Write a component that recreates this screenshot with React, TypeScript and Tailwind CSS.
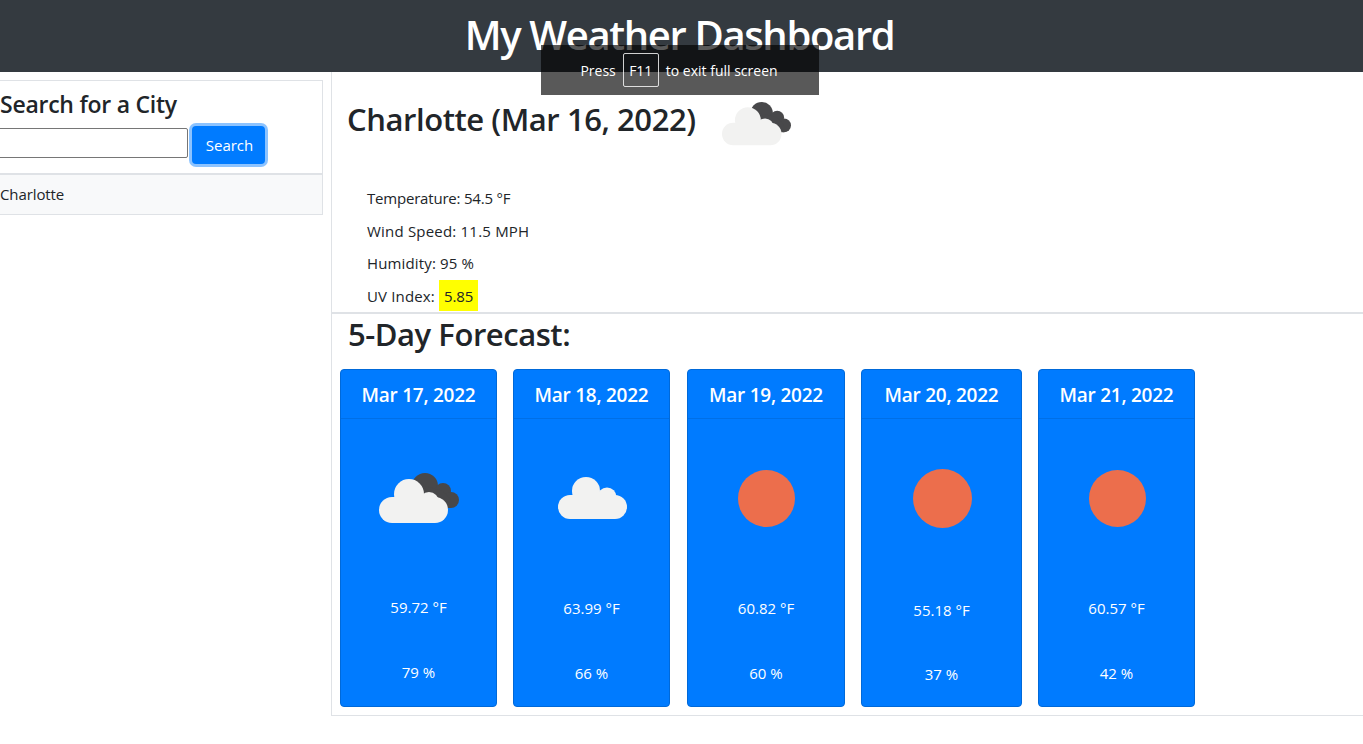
const font = "font-['Open_Sans',sans-serif]";

const BrokenClouds = ({ width, height }: { width: number; height: number }) => (
  <svg width={width} height={height} viewBox="0 0 80 52" className="block">
    <g fill="#48484a">
      <circle cx="46" cy="13" r="13" />
      <circle cx="64" cy="18" r="8" />
      <circle cx="72" cy="27" r="8" />
      <path d="M46 13 L64 18 L72 27 L72 35 L50 35 Z" />
    </g>
    <g fill="#f2f2f1">
      <circle cx="30" cy="21" r="15" />
      <circle cx="50" cy="29" r="10" />
      <rect x="0" y="24" width="69" height="26" rx="13" />
    </g>
  </svg>
);

const ScatteredClouds = () => (
  <svg width="69" height="42" viewBox="0 0 69 42" className="block">
    <g fill="#f2f2f1">
      <circle cx="28" cy="14" r="14" />
      <circle cx="49" cy="20" r="9.5" />
      <rect x="0" y="18" width="69" height="24" rx="12" />
    </g>
  </svg>
);

const Sun = ({ size }: { size: number }) => (
  <svg width={size} height={size} viewBox="0 0 60 60" className="block">
    <circle cx="30" cy="30" r="30" fill="#ec6e4c" />
  </svg>
);

const forecast = [
  { date: "Mar 17, 2022", temp: "59.72 °F", hum: "79 %", width: "w-[157px]", gap: "mt-[18px]", humGap: "mt-[41px]", iconBox: "pt-[2px]", icon: <BrokenClouds width={80} height={52} /> },
  { date: "Mar 18, 2022", temp: "63.99 °F", hum: "66 %", width: "w-[157px]", gap: "mt-[19px]", humGap: "mt-[41px]", iconBox: "pl-[2px]", icon: <ScatteredClouds /> },
  { date: "Mar 19, 2022", temp: "60.82 °F", hum: "60 %", width: "w-[158px] ml-[1px]", gap: "mt-[19px]", humGap: "mt-[41px]", iconBox: "", icon: <Sun size={57} /> },
  { date: "Mar 20, 2022", temp: "55.18 °F", hum: "37 %", width: "w-[161px]", gap: "mt-[21px]", humGap: "mt-[40px]", iconBox: "pl-[2px]", icon: <Sun size={59} /> },
  { date: "Mar 21, 2022", temp: "60.57 °F", hum: "42 %", width: "w-[157px]", gap: "mt-[19px]", humGap: "mt-[41px]", iconBox: "pl-[2px]", icon: <Sun size={57} /> },
];

export default function App() {
  return (
    <div className={`${font} relative h-[744px] w-[1363px] overflow-hidden bg-white text-[#212529]`}>
      <header className="flex h-[72px] items-center justify-center bg-[#343a40] pr-[4px]">
        <h1 className="-mt-[3px] text-[40px] leading-[48px] font-semibold tracking-[-1.35px] text-white">My Weather Dashboard</h1>
      </header>

      {/* full screen hint */}
      <div className="absolute top-[45px] left-[541px] flex h-[50px] w-[278px] items-center justify-center gap-[7px] bg-black/65 pr-[2px] text-[14px] text-white">
        <span>Press</span>
        <span className="flex h-[34px] w-[36px] items-center justify-center rounded-[2px] border border-white/80">F11</span>
        <span>to exit full screen</span>
      </div>

      <div className="flex">
        <aside className="w-[331px] shrink-0 pt-2 pr-2">
          <div className="border-y border-r border-[#dfe2e6]">
            <div className="h-[92px] pt-[6px]">
              <h3 className="text-[23px] leading-[34px] font-semibold tracking-[-0.25px] whitespace-nowrap">Search for a City</h3>
              <div className="mt-[5px] flex items-start">
                <input className="-ml-[2px] mt-[2px] h-[30px] w-[190px] rounded-[2px] border border-[#767676] bg-white" />
                <button className="ml-1 h-[38px] w-[73px] rounded-[4px] bg-[#007bff] pl-[2px] text-[15px] text-white ring-[3px] ring-[#007bff]/45">Search</button>
              </div>
            </div>
            <div className="flex h-[41px] items-center border-t-2 border-[#dfe2e6] bg-[#f8f9fa] text-[15px] tracking-[-0.1px]">Charlotte</div>
          </div>
        </aside>

        <main className="h-[644px] flex-1 border-b border-l border-[#dfe2e6]">
          <section className="h-[240px] pt-[24px]">
            <div className="relative pl-[15px]">
              <h2 className="text-[31px] leading-[46px] font-semibold tracking-[-0.44px]">Charlotte (Mar 16, 2022)</h2>
              <div className="absolute top-[6px] left-[390px]">
                <BrokenClouds width={69} height={45} />
              </div>
            </div>
            <div className="mt-[40px] pl-[35px] text-[15px]">
              <p className="h-[32px] leading-[32px] tracking-[-0.2px]">Temperature: 54.5 °F</p>
              <p className="h-[33px] leading-[35px] tracking-[0.2px]">Wind Speed: 11.5 MPH</p>
              <p className="h-[32px] leading-[32px] tracking-[0.15px]">Humidity: 95 %</p>
              <p className="mt-px flex h-[31px] items-start leading-[33px] tracking-[0.15px]">
                UV Index:
                <span className="ml-[4px] h-[31px] bg-[#ffff00] px-[5px] tracking-[-0.1px]">5.85</span>
              </p>
            </div>
          </section>

          <section className="border-t-2 border-[#dfe2e6]">
            <h2 className="pt-[1px] pl-[16px] text-[31px] leading-[38px] font-semibold tracking-[-0.45px]">5-Day Forecast:</h2>
            <div className="mt-[16px] flex gap-4 pl-[8px]">
              {forecast.map((day) => (
                <div key={day.date} className={`${day.width} h-[338px] rounded-[4px] border border-[#0069d9] bg-[#007bff] text-white`}>
                  <div className="flex h-[49px] items-center justify-center border-b border-[#006fe6] pt-[2px] text-[19px] font-semibold tracking-[-0.25px]">
                    {day.date}
                  </div>
                  <div className="flex flex-col items-center text-[15px]">
                    <div className={`${day.iconBox} flex h-[158px] items-center justify-center`}>{day.icon}</div>
                    <p className={`${day.gap} leading-6`}>{day.temp}</p>
                    <p className={`${day.humGap} leading-6`}>{day.hum}</p>
                  </div>
                </div>
              ))}
            </div>
          </section>
        </main>
      </div>
    </div>
  );
}
